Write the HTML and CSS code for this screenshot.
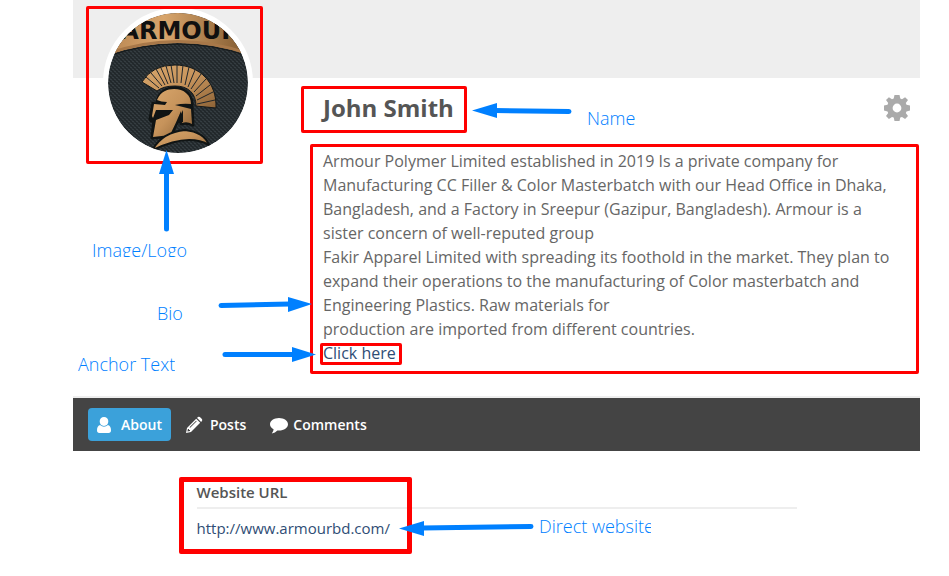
FILE: index.html
```html
<!DOCTYPE html>
<html lang="en">
<head>
    <meta charset="UTF-8">
    <meta name="viewport" content="width=device-width, initial-scale=1.0">
    <title>John Smith - Profile</title>
    <link rel="stylesheet" href="styles.css">
</head>
<body>
    <div class="profile">
        <div class="cover"></div>

        <header class="header">
            <div class="photo">
                <svg viewBox="0 0 140 140" role="img" aria-label="Armour logo">
                    <defs>
                        <linearGradient id="gold" x1="0" y1="0" x2="1" y2="0">
                            <stop offset="0" stop-color="#b98753"/>
                            <stop offset="0.4" stop-color="#d8a56c"/>
                            <stop offset="1" stop-color="#80592f"/>
                        </linearGradient>
                        <linearGradient id="bronze" x1="0" y1="0" x2="1" y2="1">
                            <stop offset="0" stop-color="#d9a76c"/>
                            <stop offset="0.5" stop-color="#c6935b"/>
                            <stop offset="1" stop-color="#8c6236"/>
                        </linearGradient>
                        <pattern id="carbon" width="4" height="4" patternUnits="userSpaceOnUse">
                            <rect width="4" height="4" fill="#22282b"/>
                            <path d="M0 0h2v1H0zM2 2h2v1H2z" fill="#353d41"/>
                            <path d="M1 1h2v1H1zM3 3h1v1H3zM0 3h1v1H0z" fill="#2b3236"/>
                        </pattern>
                    </defs>
                    <rect width="140" height="140" fill="url(#carbon)"/>
                    <!-- name band -->
                    <path d="M0 0H140V42Q70 18 0 42Z" fill="url(#gold)"/>
                    <path d="M0 42Q70 18 140 42V39Q70 15 0 39Z" fill="#a87849"/>
                    <path d="M0 43Q70 19 140 43" fill="none" stroke="#15191a" stroke-width="1"/>
                    <text class="band-name" x="72" y="26" text-anchor="middle">ARMOUR</text>
                    <!-- crest -->
                    <path d="M34 69Q44 52 67 52C92 52 109 70 108 95L88 93C88 80 80 73 67 73Q55 73 49 78Z" fill="url(#bronze)" stroke="#15191a" stroke-width="1"/>
                    <path d="M51 75L38 64M54 73L43 60M57 72L48 56M60 71L53 55M63 70L58 53M66 70L63 52M69 70L69 52M73 70L75 52M77 72L81 54M80 74L87 57M83 76L93 61M86 79L98 66M88 83L102 72M89 87L105 79M89 91L107 87" stroke="#20262a" stroke-width="1"/>
                    <!-- helmet -->
                    <path d="M49 92C49 81 57 75 66 75C77 75 85 82 84 94L85 112Q78 109 73 111V100L63 123L44 125L46 106L43 108L42 106L45 90Z" fill="#101414" stroke="#101414" stroke-width="3" stroke-linejoin="round"/>
                    <path d="M50 85C53 79 59 76 66 76C76 76 83 82 83 91Q75 90 67 92L83 96L84 111Q79 108 74 110L73 98Q68 110 62 122L45 124L48 107L61 102L65 97H48L45 105L44 103L46 91L57 92L59 89Q53 89 49 87Z" fill="url(#bronze)"/>
                    <path d="M70 107L75 97V109L69 111Z" fill="#101414"/>
                    <path d="M45 136Q55 119 77 117Q96 119 101 132Q80 120 45 137Z" fill="url(#bronze)" stroke="#101414" stroke-width="2"/>
                </svg>
            </div>

            <div class="info">
                <div class="title-row">
                    <h1>John Smith</h1>
                    <button class="settings" type="button" aria-label="Settings">
                        <svg viewBox="0 0 26 26">
                            <path fill-rule="evenodd" d="M10.500 0h5l.8 3.600 1.700.7L21.100 2.200 24 5.100l-2.200 3 .7 1.700 3.500.8v5l-3.500.8-.7 1.700 2.200 3-2.900 2.900-3.100-2.100-1.700.7-.8 3.400h-5l-.8-3.400-1.700-.7-3.100 2.100L2 21.100l2.200-3-.7-1.700L0 15.600v-5l3.500-.8.7-1.700L2 5.100 4.900 2.200 8 4.300l1.700-.7zM13 8.600a4.400 4.400 0 1 0 0 8.800 4.400 4.400 0 0 0 0-8.800z"/>
                        </svg>
                    </button>
                </div>
                <p class="bio">
                    Armour Polymer Limited established in 2019 Is a private company for Manufacturing CC Filler &amp; Color Masterbatch with our Head Office in Dhaka, Bangladesh, and a Factory in Sreepur (Gazipur, Bangladesh). Armour is a sister concern of well-reputed group<br>
                    Fakir Apparel Limited with spreading its foothold in the market. They plan to expand their operations to the manufacturing of Color masterbatch and Engineering Plastics. Raw materials for<br>
                    production are imported from different countries.<br>
                    <a href="#">Click here</a>
                </p>
            </div>
        </header>

        <nav class="tabs">
            <a class="tab active" href="#about">
                <svg viewBox="0 0 18 18"><path d="M9 1a4.300 4.300 0 0 1 4.300 4.600C13.300 8.200 11.500 10 9 10S4.700 8.200 4.700 5.600A4.300 4.300 0 0 1 9 1zM5 9q4 3.500 8 0c2.200.4 3 3 3 5.200 0 1.800-.8 2.800-2.400 2.800H4.400C2.800 17 2 16 2 14.200 2 12 2.800 9.400 5 9z"/></svg>
                About
            </a>
            <a class="tab" href="#posts">
                <svg viewBox="0 0 18 18"><path fill-rule="evenodd" d="M1 17l1-5L11.200 2.800l4 4L6 16zM12.100 1.900l.8-.8q1-.8 2 0l2 2q.8 1 0 2l-.8.8zM2.900 13l-.5 2.500 2.600-.5v-1H4v-1zM4.500 11.300l.7.500 6.500-6.500-.6-.6z"/></svg>
                Posts
            </a>
            <a class="tab tab-comments" href="#comments">
                <svg viewBox="0 0 18 18"><path d="M9 2c5 0 9 2.800 9 6.300s-4 6.300-9 6.300l-1.600-.1Q5.200 17 1.800 17.400q1.700-1.900 1.800-4.200Q0 11.400 0 8.300C0 4.800 4 2 9 2z"/></svg>
                Comments
            </a>
        </nav>

        <section class="about" id="about">
            <h2>Website URL</h2>
            <a href="http://www.armourbd.com/">http://www.armourbd.com/</a>
        </section>
    </div>

    <!-- callouts drawn over the profile -->
    <div class="callouts">
        <div class="box box-photo"></div>
        <div class="box box-name"></div>
        <div class="box box-bio"></div>
        <div class="box box-anchor"></div>
        <div class="box box-website"></div>

        <svg class="arrows" viewBox="0 0 949 576">
            <g stroke="#0080ff" stroke-width="5" stroke-linecap="round">
                <path d="M569 111.500L494 110.500"/>
                <path d="M166.500 229V172"/>
                <path d="M221 305.500L290 304"/>
                <path d="M225 354.500H294"/>
                <path d="M531 526.500L422 528"/>
            </g>
            <g fill="#0080ff">
                <path d="M472 110.500L497 103V118Z"/>
                <path d="M166.500 150L174 174H159Z"/>
                <path d="M312 304L288 297V312Z"/>
                <path d="M316 354.500L292 347V362Z"/>
                <path d="M399 528.500L424 521V536Z"/>
            </g>
        </svg>

        <span class="note note-name">Name</span>
        <span class="note note-photo">Image/Logo</span>
        <span class="note note-bio">Bio</span>
        <span class="note note-anchor">Anchor Text</span>
        <span class="note note-website">Direct website</span>
    </div>
</body>
</html>
```

FILE: styles.css
```css
body {
    position: relative;
    margin: 0;
    background-color: #ffffff;
    font-family: "Open Sans", Arial, sans-serif;
    color: #666;
}
.profile {
    margin: 0 29px 0 73px;
}
a {
    color: #2f4d75;
    text-decoration: none;
}

/* header */
.cover {
    height: 78px;
    background-color: #eee;
}
.header {
    display: flex;
    gap: 70px;
    padding: 0 10px 31px 30px;
    border-bottom: 2px solid #eee;
}
.photo {
    flex: none;
    box-sizing: border-box;
    width: 150px;
    height: 150px;
    margin-top: -70px;
    border: 5px solid #fff;
    border-radius: 50%;
    background-color: #fff;
    overflow: hidden;
}
.photo svg {
    display: block;
    width: 100%;
    height: 100%;
    border-radius: 50%;
}
.band-name {
    font-family: "DejaVu Sans", Verdana, sans-serif;
    font-size: 24px;
    font-weight: 700;
    fill: #101010;
}
.info {
    flex: 1;
}
.title-row {
    display: flex;
    justify-content: space-between;
    align-items: center;
    height: 60px;
    margin-bottom: 11px;
}
h1 {
    margin: 0;
    font-size: 24px;
    line-height: 32px;
    color: #555;
}
.settings {
    width: 26px;
    height: 26px;
    padding: 0;
    border: none;
    background: none;
    cursor: pointer;
}
.settings svg {
    display: block;
    fill: #aaa;
}
.bio {
    margin: 0;
    padding-right: 16px;
    font-size: 16px;
    line-height: 24px;
}

/* tabs */
.tabs {
    display: flex;
    gap: 7px;
    padding: 10px 15px;
    background-color: #444;
}
.tab {
    display: flex;
    align-items: center;
    gap: 7px;
    padding: 0 9px 0 7px;
    border-radius: 4px;
    font-size: 14px;
    font-weight: 600;
    line-height: 33px;
    color: #fff;
}
.tab svg {
    width: 18px;
    height: 18px;
    fill: #fff;
}
.tab.active {
    gap: 8px;
    background-color: #3ba1da;
}
.tab-comments {
    gap: 5px;
    padding-left: 8px;
}

/* about */
.about {
    max-width: 600px;
    margin: 30px auto;
    font-size: 15px;
}
.about h2 {
    margin: 0 0 8px;
    padding-bottom: 4px;
    border-bottom: 2px solid #eee;
    font-size: 15px;
    font-weight: 600;
    line-height: 22px;
    color: #555;
}
.about a {
    line-height: 22px;
}

/* callouts */
.callouts {
    position: absolute;
    top: 0;
    left: 0;
    pointer-events: none;
}
.box {
    position: absolute;
    box-sizing: border-box;
    border: 3px solid #ff0000;
    border-radius: 2px;
}
.box-photo {
    left: 86px;
    top: 6px;
    width: 177px;
    height: 158px;
}
.box-name {
    left: 301px;
    top: 86px;
    width: 166px;
    height: 47px;
}
.box-bio {
    left: 310px;
    top: 144px;
    width: 609px;
    height: 230px;
}
.box-anchor {
    left: 320px;
    top: 343px;
    width: 82px;
    height: 22px;
}
.box-website {
    left: 179px;
    top: 477px;
    width: 233px;
    height: 77px;
    border-width: 5px;
}
.arrows {
    position: absolute;
    left: 0;
    top: 0;
    width: 949px;
    height: 576px;
}
.note {
    position: absolute;
    overflow: hidden;
    font-size: 18px;
    font-weight: 300;
    line-height: 24px;
    white-space: nowrap;
    color: #0080ff;
}
.note-name {
    left: 587px;
    top: 106px;
}
.note-photo {
    left: 92px;
    top: 238px;
    height: 19px;
}
.note-bio {
    left: 157px;
    top: 301px;
}
.note-anchor {
    left: 78px;
    top: 352px;
    width: 97px;
}
.note-website {
    left: 539px;
    top: 514px;
    width: 112px;
}
```
